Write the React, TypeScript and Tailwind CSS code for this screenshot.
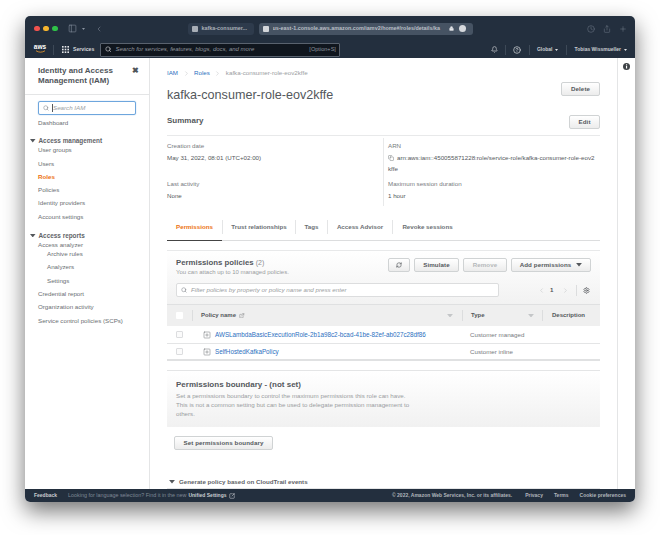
import { Bell, ChevronLeft, ChevronRight, Copy, ExternalLink, CircleHelp, Lock, Plus, RefreshCw, Search, Settings, Share, SquareArrowOutUpRight, SquarePlus, PanelLeft, Clock } from "lucide-react";

const font = "font-['Liberation_Sans',Arial,sans-serif]";

function Caret({ className }: { className: string }) {
    return (
        <svg viewBox="0 0 10 6" className={className}>
            <path d="M0 0h10L5 6z" fill="currentColor" />
        </svg>
    );
}

function NavItem({ label, active, sub }: { label: string; active?: boolean; sub?: boolean }) {
    return (
        <div className={`h-[13.3px] flex items-center text-[6.2px] ${sub ? "pl-[9px]" : ""} ${active ? "text-[#ec7211] font-bold" : "text-[#6b6f73]"}`}>
            {label}
        </div>
    );
}

function Btn({ label, className, muted }: { label: string; className: string; muted?: boolean }) {
    return (
        <div className={`h-[14px] flex items-center justify-center gap-[5px] rounded-[2px] border border-[#d0d3d4] bg-gradient-to-b from-white to-[#ececec] text-[6.2px] font-bold tracking-[0.1px] ${muted ? "text-[#b5b8ba]" : "text-[#54585c]"} ${className}`}>
            {label}
        </div>
    );
}

function Field({ label, value }: { label: string; value: string }) {
    return (
        <div className="h-[38px]">
            <div className="text-[6.2px] text-[#777b80] leading-[8px]">{label}</div>
            <div className="text-[6.2px] text-[#54585c] leading-[8px] mt-[3.5px]">{value}</div>
        </div>
    );
}

function Tab({ label, active, className }: { label: string; active?: boolean; className: string }) {
    return (
        <div className={`h-[27px] flex items-center justify-center relative ${className}`}>
            <span className={`text-[6.2px] font-bold whitespace-nowrap ${active ? "text-[#ec7211]" : "text-[#6b6f73]"}`}>{label}</span>
        </div>
    );
}

function Row({ name, type, tall }: { name: string; type: string; tall?: boolean }) {
    return (
        <div className={`flex items-center bg-white ${tall ? "h-[18px] border-b border-[#e4e5e6]" : "h-[17px] border-b-2 border-[#e0e1e2]"}`}>
            <div className="ml-[9px] w-[7px] h-[7px] border border-[#dcdddf] bg-[#fbfbfb] rounded-[1px]"></div>
            <SquarePlus className="ml-[20px] w-[8px] h-[8px] text-[#6b6f73]" strokeWidth={1.5} />
            <div className="ml-[4px] w-[255px] text-[6.3px] text-[#2b6fc0] whitespace-nowrap">{name}</div>
            <div className="text-[6.2px] text-[#777b80]">{type}</div>
        </div>
    );
}

function App() {
    return (
        <div className={`w-[660px] h-[535px] bg-white overflow-hidden pl-[25px] pt-[16px] ${font}`}>
            <div className="w-[610px] h-[486px] flex flex-col rounded-[5px] overflow-hidden bg-white shadow-[0_9px_22px_rgba(0,0,0,0.55)]">
                {/* browser title bar */}
                <div className="h-[25px] bg-[#232f3e] flex items-center pl-[9px] pr-[8px] shrink-0">
                    <div className="w-[5.5px] h-[5.5px] rounded-full bg-[#f0524e]"></div>
                    <div className="w-[5.5px] h-[5.5px] rounded-full bg-[#f5b52e] ml-[3.5px]"></div>
                    <div className="w-[5.5px] h-[5.5px] rounded-full bg-[#2fc248] ml-[3.5px]"></div>
                    <PanelLeft className="w-[9px] h-[9px] ml-[10px] text-[#8a93a0]" strokeWidth={1.5} />
                    <Caret className="w-[3px] h-[2px] ml-[5px] text-[#8a93a0]" />
                    <ChevronLeft className="w-[8px] h-[8px] ml-[10px] text-[#8a93a0]" strokeWidth={1.5} />
                    <div className="ml-[85px] w-[66px] h-[12px] rounded-[3px] bg-[#2e3b4c] flex items-center pl-[4px]">
                        <div className="w-[6px] h-[6px] bg-[#a8aeb6] rounded-[1px]"></div>
                        <span className="ml-[4px] text-[5.4px] font-bold text-[#a9afb7] whitespace-nowrap">kafka-consumer...</span>
                    </div>
                    <div className="ml-[5px] w-[214px] h-[12px] rounded-[3px] bg-[#465363] flex items-center pl-[4px]">
                        <div className="w-[6px] h-[6px] bg-[#d3d6da] rounded-[1px]"></div>
                        <span className="ml-[4px] w-[176px] overflow-hidden whitespace-nowrap text-[5.4px] font-bold text-[#b9bfc6]">us-east-1.console.aws.amazon.com/iamv2/home#/roles/details/ka</span>
                        <Lock className="w-[5px] h-[5px] text-[#e3e5e8]" fill="currentColor" />
                        <div className="ml-[5px] w-[7px] h-[7px] rounded-full bg-[#d6d9dd]"></div>
                    </div>
                    <div className="ml-auto flex items-center gap-[8px] text-[#7f8895]">
                        <Clock className="w-[8px] h-[8px]" strokeWidth={1.3} />
                        <Share className="w-[8px] h-[8px]" strokeWidth={1.3} />
                        <Plus className="w-[8px] h-[8px]" strokeWidth={1.3} />
                    </div>
                </div>

                {/* aws nav */}
                <div className="h-[17px] bg-[#232f3e] flex items-center shrink-0 pl-[8px] pr-[8px]">
                    <div className="w-[14px] h-[13px] flex flex-col items-center leading-none">
                        <span className="text-[6.5px] font-bold text-white leading-[7px]">aws</span>
                        <svg viewBox="0 0 14 4" className="w-[13px] h-[3px]">
                            <path d="M1 1c4 2.5 8 2.5 12 0" stroke="#ec9a2d" strokeWidth="1.1" fill="none" />
                        </svg>
                    </div>
                    <div className="w-px h-[10px] bg-[#3d4957] ml-[6px]"></div>
                    <svg viewBox="0 0 7 7" className="ml-[8px] w-[7px] h-[7px] text-[#e6e8ea]" fill="currentColor">
                        <rect x="0" y="0" width="1.6" height="1.6" /><rect x="2.7" y="0" width="1.6" height="1.6" /><rect x="5.4" y="0" width="1.6" height="1.6" />
                        <rect x="0" y="2.7" width="1.6" height="1.6" /><rect x="2.7" y="2.7" width="1.6" height="1.6" /><rect x="5.4" y="2.7" width="1.6" height="1.6" />
                        <rect x="0" y="5.4" width="1.6" height="1.6" /><rect x="2.7" y="5.4" width="1.6" height="1.6" /><rect x="5.4" y="5.4" width="1.6" height="1.6" />
                    </svg>
                    <span className="ml-[4px] w-[20px] text-[5.2px] font-bold text-[#d5d8db]">Services</span>
                    <div className="ml-[7px] w-[240px] h-[14px] border border-[#59626e] bg-[#10161e] rounded-[1px] flex items-center pl-[4px] pr-[3px]">
                        <Search className="w-[6.5px] h-[6.5px] text-[#d8dadd]" strokeWidth={2.2} />
                        <span className="ml-[4px] text-[6px] italic text-[#8f959c] whitespace-nowrap">Search for services, features, blogs, docs, and more</span>
                        <span className="ml-auto text-[5.6px] text-[#8f959c]">[Option+S]</span>
                    </div>
                    <Bell className="ml-[151px] w-[7px] h-[7px] text-[#dcdfe2]" strokeWidth={2} />
                    <div className="w-px h-[10px] bg-[#3d4957] ml-[7px]"></div>
                    <CircleHelp className="ml-[7px] w-[8px] h-[8px] text-[#dcdfe2]" strokeWidth={2} />
                    <div className="w-px h-[10px] bg-[#3d4957] ml-[8px]"></div>
                    <span className="ml-[7px] text-[5px] font-bold text-[#c9cdd1]">Global</span>
                    <Caret className="ml-[3px] w-[3px] h-[2px] text-[#dcdfe2]" />
                    <div className="w-px h-[10px] bg-[#3d4957] ml-[8px]"></div>
                    <span className="ml-[7px] text-[5px] font-bold text-[#c9cdd1] whitespace-nowrap">Tobias Wissmueller</span>
                    <Caret className="ml-[3px] w-[3px] h-[2px] text-[#dcdfe2]" />
                </div>

                {/* body */}
                <div className="flex flex-1 min-h-0">
                    {/* sidebar */}
                    <div className="w-[125px] shrink-0 border-r border-[#e4e5e6]">
                        <div className="h-[37px] border-b border-[#e4e5e6] pl-[13px] pr-[10px] pt-[8px] flex justify-between">
                            <div className="text-[8px] font-bold leading-[10px] text-[#50555a] whitespace-nowrap">Identity and Access<br />Management (IAM)</div>
                            <div className="text-[8px] leading-[8px] font-bold text-[#50555a] mt-[1px]">✖</div>
                        </div>
                        <div className="mt-[6px] ml-[13px] w-[98px] h-[14px] rounded-[2px] border border-[#6ea6dd] flex items-center pl-[4px] shadow-[0_0_1px_#6ea6dd]">
                            <Search className="w-[6px] h-[6px] text-[#777b80]" strokeWidth={2} />
                            <div className="ml-[3px] w-px h-[8px] bg-[#54585c]"></div>
                            <span className="text-[6.2px] italic text-[#9a9ea3]">Search IAM</span>
                        </div>
                        <div className="pl-[13px] mt-[1px]">
                            <NavItem label="Dashboard" />
                        </div>
                        <div className="mt-[7px] pl-[5px] flex items-center h-[9px]">
                            <Caret className="w-[5.5px] h-[3.5px] text-[#54585c]" />
                            <span className="ml-[3px] text-[6.4px] font-bold text-[#5f6368]">Access management</span>
                        </div>
                        <div className="pl-[13px] -mt-[2px]">
                            <NavItem label="User groups" />
                            <NavItem label="Users" />
                            <NavItem label="Roles" active />
                            <NavItem label="Policies" />
                            <NavItem label="Identity providers" />
                            <NavItem label="Account settings" />
                        </div>
                        <div className="mt-[8px] pl-[5px] flex items-center h-[9px]">
                            <Caret className="w-[5.5px] h-[3.5px] text-[#54585c]" />
                            <span className="ml-[3px] text-[6.4px] font-bold text-[#5f6368]">Access reports</span>
                        </div>
                        <div className="pl-[13px]">
                            <div className="h-[10px] flex items-center text-[6.2px] text-[#6b6f73]">Access analyzer</div>
                            <div className="-mt-[3px]">
                                <NavItem label="Archive rules" sub />
                                <NavItem label="Analyzers" sub />
                                <NavItem label="Settings" sub />
                                <NavItem label="Credential report" />
                                <NavItem label="Organization activity" />
                                <NavItem label="Service control policies (SCPs)" />
                            </div>
                        </div>
                    </div>

                    {/* main */}
                    <div className="w-[468px] shrink-0 border-r border-[#e4e5e6] pl-[17px] pr-[17px] overflow-hidden">
                        <div className="h-[24px] flex items-center pt-[6px] text-[6.2px]">
                            <span className="text-[#2b6fc0]">IAM</span>
                            <ChevronRight className="w-[7px] h-[7px] mx-[4.5px] text-[#a6a9ac]" strokeWidth={1.2} />
                            <span className="text-[#2b6fc0]">Roles</span>
                            <ChevronRight className="w-[7px] h-[7px] mx-[4.5px] text-[#a6a9ac]" strokeWidth={1.2} />
                            <span className="text-[#9a9da1]">kafka-consumer-role-eov2kffe</span>
                        </div>
                        <div className="h-[14px] flex items-start justify-between">
                            <div className="mt-[5px] text-[12.6px] text-[#54585c] leading-[16px]">kafka-consumer-role-eov2kffe</div>
                            <Btn label="Delete" className="w-[39px]" />
                        </div>
                        <div className="mt-[19px] h-[14px] flex items-start justify-between">
                            <div className="text-[8px] font-bold text-[#54585c] leading-[11px]">Summary</div>
                            <Btn label="Edit" className="w-[31px]" />
                        </div>
                        <div className="mt-[6px] border-t border-[#e8e9ea] pt-[2px] flex h-[71px]">
                            <div className="w-[217px] border-r border-[#e8e9ea] pt-[4px]">
                                <Field label="Creation date" value="May 31, 2022, 08:01 (UTC+02:00)" />
                                <Field label="Last activity" value="None" />
                            </div>
                            <div className="pl-[4px] pt-[4px] flex-1">
                                <div className="h-[38px]">
                                    <div className="text-[6.2px] text-[#777b80] leading-[8px]">ARN</div>
                                    <div className="text-[6.2px] text-[#54585c] leading-[11px] mt-[2px] whitespace-nowrap">
                                        <Copy className="inline w-[6px] h-[6px] mr-[3px] -mt-[1px]" strokeWidth={1.5} />
                                        arn:aws:iam::450055871228:role/service-role/kafka-consumer-role-eov2<br />kffe
                                    </div>
                                </div>
                                <Field label="Maximum session duration" value="1 hour" />
                            </div>
                        </div>
                        <div className="mt-[7px] flex items-center border-b border-[#dcddde] h-[28px] relative">
                            <div className="absolute left-0 bottom-[-1px] w-[55px] h-[1px] bg-[#444]"></div>
                            <Tab label="Permissions" active className="w-[55px]" />
                            <div className="w-px h-[14px] bg-[#e4e5e6]"></div>
                            <Tab label="Trust relationships" className="w-[72px]" />
                            <div className="w-px h-[14px] bg-[#e4e5e6]"></div>
                            <Tab label="Tags" className="w-[31px]" />
                            <div className="w-px h-[14px] bg-[#e4e5e6]"></div>
                            <Tab label="Access Advisor" className="w-[64px]" />
                            <div className="w-px h-[14px] bg-[#e4e5e6]"></div>
                            <Tab label="Revoke sessions" className="w-[69px]" />
                        </div>

                        {/* permissions policies panel */}
                        <div className="mt-[9px] border-t border-[#e8e9ea]">
                            <div className="bg-gradient-to-b from-white to-[#f2f2f2] h-[53px] pl-[9px] pr-[9px] pt-[7px]">
                                <div className="flex justify-between h-[15px]">
                                    <div>
                                        <div className="mt-[1px] text-[7.8px] font-bold text-[#54585c] leading-[8px] whitespace-nowrap">Permissions policies <span className="font-normal text-[#8a8d91] text-[7px]">(2)</span></div>
                                        <div className="text-[6px] text-[#9a9da1] leading-[7px] mt-[2px] whitespace-nowrap">You can attach up to 10 managed policies.</div>
                                    </div>
                                    <div className="flex gap-[4px]">
                                        <div className="w-[22px] h-[14px] flex items-center justify-center rounded-[2px] border border-[#d0d3d4] bg-gradient-to-b from-white to-[#ececec]">
                                            <RefreshCw className="w-[6px] h-[6px] text-[#54585c]" strokeWidth={2.5} />
                                        </div>
                                        <Btn label="Simulate" className="w-[45px]" />
                                        <Btn label="Remove" muted className="w-[44px]" />
                                        <div className="w-[80px] h-[14px] flex items-center justify-center gap-[5px] rounded-[2px] border border-[#d0d3d4] bg-gradient-to-b from-white to-[#ececec] text-[6.2px] font-bold tracking-[0.1px] text-[#54585c] whitespace-nowrap">
                                            Add permissions <Caret className="w-[6px] h-[3.5px]" />
                                        </div>
                                    </div>
                                </div>
                                <div className="mt-[10px] flex items-center">
                                    <div className="w-[323px] h-[14px] bg-white border border-[#dcddde] rounded-[2px] flex items-center pl-[4px]">
                                        <Search className="w-[6px] h-[6px] text-[#777b80]" strokeWidth={2} />
                                        <span className="ml-[4px] text-[6.2px] italic text-[#9a9da1] whitespace-nowrap">Filter policies by property or policy name and press enter</span>
                                    </div>
                                    <ChevronLeft className="ml-[39px] w-[7px] h-[7px] text-[#b5b8ba]" strokeWidth={1.5} />
                                    <span className="ml-[5px] text-[6.2px] font-bold text-[#54585c]">1</span>
                                    <ChevronRight className="ml-[9px] w-[7px] h-[7px] text-[#b5b8ba]" strokeWidth={1.5} />
                                    <div className="w-px h-[11px] bg-[#dcddde] ml-[7px]"></div>
                                    <Settings className="ml-[6px] w-[7px] h-[7px] text-[#54585c]" strokeWidth={2.4} />
                                </div>
                            </div>
                            <div className="h-[22px] bg-[#efefef] border-t border-[#dfe0e1] flex items-center">
                                <div className="ml-[9px] w-[7px] h-[7px] bg-white rounded-[1px]"></div>
                                <div className="ml-[9px] w-px h-[11px] bg-[#dcddde]"></div>
                                <div className="ml-[8px] flex items-center w-[252px] text-[6px] font-bold text-[#54585c]">
                                    Policy name <ExternalLink className="ml-[3px] w-[5.5px] h-[5.5px]" strokeWidth={1.5} />
                                    <Caret className="ml-auto w-[6px] h-[3.5px] text-[#c4c6c8]" />
                                </div>
                                <div className="ml-[9px] w-px h-[11px] bg-[#dcddde]"></div>
                                <div className="ml-[8px] flex items-center w-[63px] text-[6px] font-bold text-[#54585c]">
                                    Type
                                    <Caret className="ml-auto w-[6px] h-[3.5px] text-[#c4c6c8]" />
                                </div>
                                <div className="ml-[8px] w-px h-[11px] bg-[#dcddde]"></div>
                                <div className="ml-[9px] text-[6px] font-bold text-[#54585c]">Description</div>
                            </div>
                            <Row tall name="AWSLambdaBasicExecutionRole-2b1a98c2-bcad-41be-82ef-ab027c28df86" type="Customer managed" />
                            <Row name="SelfHostedKafkaPolicy" type="Customer inline" />
                        </div>

                        {/* boundary panel */}
                        <div className="mt-[9px] border-t border-[#e4e5e6] h-[57px] bg-gradient-to-b from-white to-[#f1f1f1] pl-[9px] pt-[9px]">
                            <div className="text-[8px] font-bold text-[#54585c] leading-[9px]">Permissions boundary - (not set)</div>
                            <div className="text-[6.2px] text-[#9a9da1] leading-[9px] mt-[2px] w-[240px]">
                                Set a permissions boundary to control the maximum permissions this role can have. This is not a common setting but can be used to delegate permission management to others.
                            </div>
                        </div>
                        <div className="mt-[9px] pl-[7px]">
                            <Btn label="Set permissions boundary" className="w-[99px]" />
                        </div>
                        <div className="mt-[26px] h-[13px] flex items-center border-b border-[#e4e5e6] pl-[2px]">
                            <Caret className="w-[6px] h-[3.5px] text-[#54585c]" />
                            <span className="ml-[4px] text-[6.2px] font-bold text-[#5f6368]">Generate policy based on CloudTrail events</span>
                        </div>
                    </div>

                    {/* help strip */}
                    <div className="flex-1 flex justify-center pt-[5px]">
                        <svg viewBox="0 0 8 8" className="w-[7px] h-[7px]">
                            <circle cx="4" cy="4" r="4" fill="#3f4347" />
                            <rect x="3.4" y="3.3" width="1.3" height="3" fill="#fff" />
                            <rect x="3.4" y="1.5" width="1.3" height="1.2" fill="#fff" />
                        </svg>
                    </div>
                </div>

                {/* footer */}
                <div className="h-[13px] bg-[#232f3e] flex items-center pl-[9px] pr-[9px] shrink-0 text-[5px]">
                    <span className="font-bold text-[#c9cdd1]">Feedback</span>
                    <span className="ml-[11px] text-[5.4px] text-[#7f8895]">Looking for language selection? Find it in the new</span>
                    <span className="ml-[2px] font-bold text-[#c9cdd1]">Unified Settings</span>
                    <SquareArrowOutUpRight className="ml-[2px] w-[6px] h-[6px] text-[#dcdfe2]" strokeWidth={2} />
                    <span className="ml-auto text-[#b0b5bb] font-bold">© 2022, Amazon Web Services, Inc. or its affiliates.</span>
                    <span className="ml-[13px] font-bold text-[#b0b5bb]">Privacy</span>
                    <span className="ml-[11px] font-bold text-[#b0b5bb]">Terms</span>
                    <span className="ml-[11px] font-bold text-[#b0b5bb]">Cookie preferences</span>
                </div>
            </div>
        </div>
    );
}

export default App;
